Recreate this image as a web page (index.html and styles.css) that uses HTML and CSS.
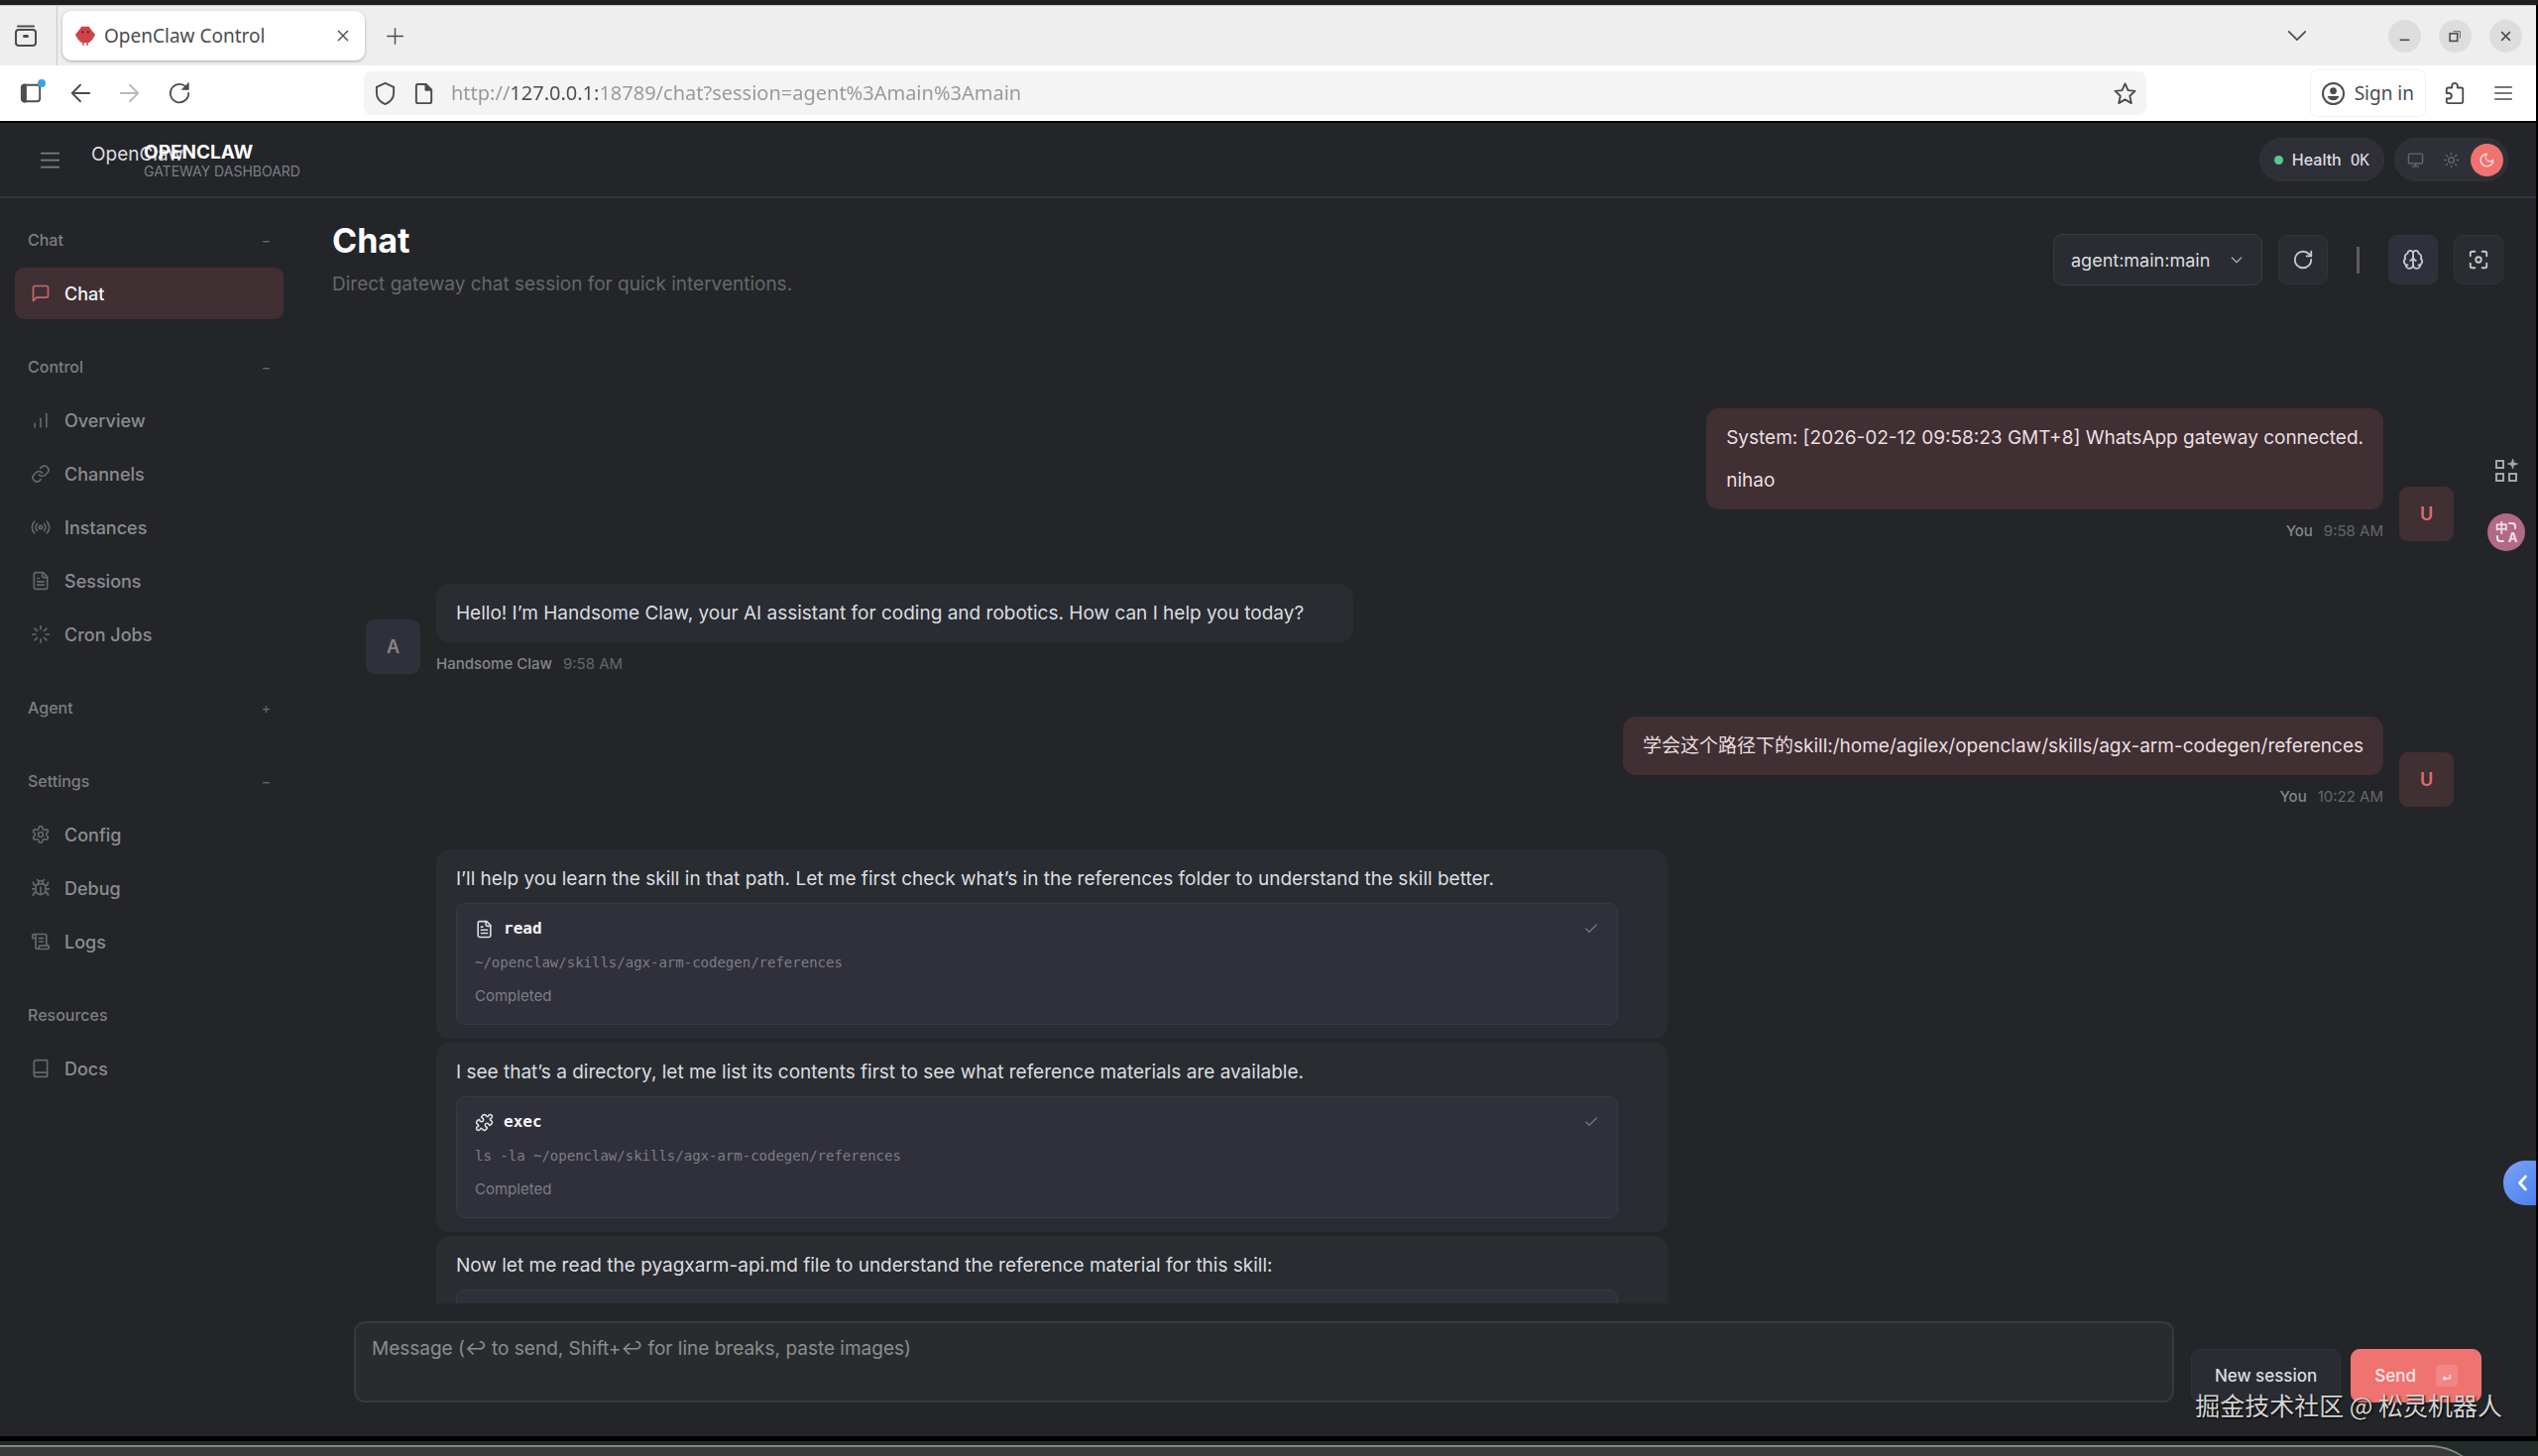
FILE: index.html
```html
<!DOCTYPE html>
<html lang="en">
<head>
    <meta charset="UTF-8">
    <meta name="viewport" content="width=device-width, initial-scale=1.0">
    <title>OpenClaw Control</title>
    <link rel="stylesheet" href="styles.css">
</head>
<body>
    <!-- Shared icons -->
    <svg class="sprite" aria-hidden="true">
        <symbol id="i-file" viewBox="0 0 24 24"><path d="M15 2H6a2 2 0 0 0-2 2v16a2 2 0 0 0 2 2h12a2 2 0 0 0 2-2V7z"/><path d="M14 2v4a2 2 0 0 0 2 2h4M10 9H8M16 13H8M16 17H8"/></symbol>
        <symbol id="i-check" viewBox="0 0 24 24"><path d="M20 6 9 17l-5-5"/></symbol>
        <symbol id="i-down" viewBox="0 0 24 24"><path d="m5 9 7 7 7-7"/></symbol>
        <symbol id="i-x" viewBox="0 0 24 24"><path d="M5 5l14 14M19 5L5 19"/></symbol>
        <symbol id="i-menu" viewBox="0 0 24 24"><path d="M2 4h20M2 12h20M2 20h20"/></symbol>
    </svg>

    <div class="window">
        <div class="tabbar">
            <button class="tab-view" aria-label="Firefox View">
                <svg class="icon" viewBox="0 0 24 24"><path d="M4 2.500h16"/><rect x="2" y="6" width="20" height="16" rx="3"/><path d="M10.500 12.500h3" stroke-width="3"/></svg>
            </button>
            <div class="tab">
                <svg class="favicon" viewBox="0 0 24 24"><path d="M8 2h8l3 4 4 5-3 5-3 3-2 1v3h-1.500v-3h-3v3H9v-3l-2-1-3-3-3-5 4-5z" fill="#cf4348"/><circle cx="9" cy="8" r="1.200" fill="#5d1b20"/><circle cx="15" cy="8" r="1.200" fill="#5d1b20"/></svg>
                <span class="tab-title">OpenClaw Control</span>
                <button class="tab-close" aria-label="Close tab"><svg class="icon" viewBox="0 0 24 24"><use href="#i-x"/></svg></button>
            </div>
            <button class="tab-new" aria-label="New tab"><svg class="icon" viewBox="0 0 24 24"><path d="M12 1v22M1 12h22"/></svg></button>
            <div class="window-controls">
                <button class="tab-list" aria-label="List all tabs"><svg class="icon" viewBox="0 0 24 24"><path d="m2 7 10 10L22 7"/></svg></button>
                <button class="window-btn" aria-label="Minimize"><svg class="icon" viewBox="0 0 24 24"><path d="M3 19h18" stroke-width="3"/></svg></button>
                <button class="window-btn" aria-label="Restore"><svg class="icon" viewBox="0 0 24 24"><rect x="2" y="7" width="14" height="14" stroke-width="3"/><path d="M8 3h13v13" stroke-width="1.500"/></svg></button>
                <button class="window-btn" aria-label="Close"><svg class="icon" viewBox="0 0 24 24"><path d="M4 4l16 16M20 4L4 20" stroke-width="3"/></svg></button>
            </div>
        </div>

        <div class="toolbar">
            <div class="toolbar-nav">
                <button class="tool-btn has-dot" aria-label="Sidebars"><svg class="icon" viewBox="0 0 24 24"><rect x="2" y="3" width="20" height="18" rx="3"/><path d="M5 4v16" stroke-width="5"/></svg></button>
                <button class="tool-btn" aria-label="Back"><svg class="icon" viewBox="0 0 24 24"><path d="M22 12H3M12 3l-9 9 9 9"/></svg></button>
                <button class="tool-btn faded" aria-label="Forward"><svg class="icon" viewBox="0 0 24 24"><path d="M2 12h19M12 3l9 9-9 9"/></svg></button>
                <button class="tool-btn" aria-label="Reload"><svg class="icon" viewBox="0 0 24 24"><path d="M22 12a10 10 0 1 1-3-7l2 2"/><path d="M22 1v7h-7z" fill="currentColor" stroke-width="1"/></svg></button>
            </div>
            <div class="urlbar">
                <svg class="icon" viewBox="0 0 24 24"><path d="M12 1 3 5v6c0 6 4 10 9 12 5-2 9-6 9-12V5z"/></svg>
                <svg class="icon" viewBox="0 0 24 24"><path d="M14 2H6a2 2 0 0 0-2 2v16a2 2 0 0 0 2 2h12a2 2 0 0 0 2-2V8z"/><path d="M14 2v6h6z" fill="currentColor"/></svg>
                <input class="url" type="text" aria-label="Address" value="http://127.0.0.1:18789/chat?session=agent%3Amain%3Amain">
                <button class="url-star" aria-label="Bookmark this page"><svg class="icon" viewBox="0 0 24 24"><path d="m12 1.500 3.200 7 7.300.8-5.500 5 1.600 7.700-6.600-3.900L5.400 22 7 14.300l-5.500-5 7.300-.8z" stroke-linejoin="round"/></svg></button>
            </div>
            <div class="toolbar-end">
                <button class="sign-in">
                    <svg class="icon" viewBox="0 0 24 24"><circle cx="12" cy="12" r="11"/><circle cx="12" cy="9" r="3.500" fill="currentColor" stroke="none"/><path d="M6 14.500h12c-1 3-3 4.500-6 4.500s-5-1.500-6-4.500z" fill="currentColor" stroke="none"/></svg>
                    <span>Sign in</span>
                </button>
                <button class="tool-btn" aria-label="Extensions"><svg class="icon" viewBox="0 0 24 24"><path d="M3 9V8a2 2 0 0 1 2-2h4V4a3 3 0 0 1 6 0v2h4a2 2 0 0 1 2 2v13a2 2 0 0 1-2 2H5a2 2 0 0 1-2-2v-3h2.500a2.500 2.500 0 0 0 0-6H3z"/></svg></button>
                <button class="tool-btn" aria-label="Application menu"><svg class="icon small" viewBox="0 0 24 24"><path d="M1 4h22M1 12h22M1 20h22"/></svg></button>
            </div>
        </div>

        <div class="app">
            <header class="topbar">
                <button class="nav-toggle" aria-label="Collapse sidebar"><svg class="icon" viewBox="0 0 24 24"><use href="#i-menu"/></svg></button>
                <div class="brand">
                    <span class="brand-logo">OpenClaw</span>
                    <div class="brand-text">
                        <div class="brand-title">OPENCLAW</div>
                        <div class="brand-sub">GATEWAY DASHBOARD</div>
                    </div>
                </div>
                <div class="topbar-status">
                    <div class="pill"><span class="dot"></span><span>Health</span><span class="mono">OK</span></div>
                    <div class="theme">
                        <button class="theme-btn" aria-label="System theme"><svg class="icon" viewBox="0 0 24 24"><rect x="2" y="3" width="20" height="14" rx="2"/><path d="M8 21h8M12 17v4"/></svg></button>
                        <button class="theme-btn" aria-label="Light theme"><svg class="icon" viewBox="0 0 24 24"><circle cx="12" cy="12" r="4"/><path d="M12 2v2M12 20v2M4.900 4.900l1.400 1.400M17.700 17.700l1.400 1.400M2 12h2M20 12h2M6.300 17.700l-1.400 1.400M19.100 4.900l-1.400 1.400"/></svg></button>
                        <button class="theme-btn active" aria-label="Dark theme"><svg class="icon" viewBox="0 0 24 24"><path d="M12 3a6 6 0 0 0 9 9 9 9 0 1 1-9-9z"/></svg></button>
                    </div>
                </div>
            </header>

            <div class="shell">
                <nav class="sidebar">
                    <div class="nav-group">
                        <button class="nav-label">Chat <span>−</span></button>
                        <a href="#chat" class="nav-item active"><svg class="icon" viewBox="0 0 24 24"><path d="M21 15a2 2 0 0 1-2 2H7l-4 4V5a2 2 0 0 1 2-2h14a2 2 0 0 1 2 2z"/></svg>Chat</a>
                    </div>
                    <div class="nav-group">
                        <button class="nav-label">Control <span>−</span></button>
                        <a href="#overview" class="nav-item"><svg class="icon" viewBox="0 0 24 24"><path d="M12 20V10M19 20V4M5 20v-4"/></svg>Overview</a>
                        <a href="#channels" class="nav-item"><svg class="icon" viewBox="0 0 24 24"><path d="M10 13a5 5 0 0 0 7.500.5l3-3a5 5 0 0 0-7-7l-1.700 1.700"/><path d="M14 11a5 5 0 0 0-7.500-.5l-3 3a5 5 0 0 0 7 7l1.700-1.700"/></svg>Channels</a>
                        <a href="#instances" class="nav-item"><svg class="icon" viewBox="0 0 24 24"><circle cx="12" cy="12" r="2"/><path d="M16.200 7.800a6 6 0 0 1 0 8.400M7.800 16.200a6 6 0 0 1 0-8.400M19.500 4.900a10 10 0 0 1 0 14.200M4.500 19.100a10 10 0 0 1 0-14.200"/></svg>Instances</a>
                        <a href="#sessions" class="nav-item"><svg class="icon" viewBox="0 0 24 24"><use href="#i-file"/></svg>Sessions</a>
                        <a href="#cron" class="nav-item"><svg class="icon" viewBox="0 0 24 24"><path d="M12 2v4M12 18v4M4.900 4.900l2.900 2.900M16.200 16.200l2.900 2.900M2 12h4M18 12h4M4.900 19.100l2.900-2.900M16.200 7.800l2.900-2.900"/></svg>Cron Jobs</a>
                    </div>
                    <div class="nav-group">
                        <button class="nav-label">Agent <span>+</span></button>
                    </div>
                    <div class="nav-group">
                        <button class="nav-label">Settings <span>−</span></button>
                        <a href="#config" class="nav-item"><svg class="icon" viewBox="0 0 24 24"><path d="M12.200 2h-.4a2 2 0 0 0-2 2v.2a2 2 0 0 1-1 1.700l-.4.3a2 2 0 0 1-2 0l-.2-.1a2 2 0 0 0-2.700.7l-.2.400a2 2 0 0 0 .7 2.700l.2.100a2 2 0 0 1 1 1.700v.5a2 2 0 0 1-1 1.700l-.2.100a2 2 0 0 0-.7 2.700l.2.400a2 2 0 0 0 2.700.7l.2-.1a2 2 0 0 1 2 0l.4.3a2 2 0 0 1 1 1.700v.2a2 2 0 0 0 2 2h.4a2 2 0 0 0 2-2v-.2a2 2 0 0 1 1-1.700l.4-.3a2 2 0 0 1 2 0l.2.1a2 2 0 0 0 2.700-.7l.2-.4a2 2 0 0 0-.7-2.700l-.2-.1a2 2 0 0 1-1-1.700v-.5a2 2 0 0 1 1-1.700l.2-.1a2 2 0 0 0 .7-2.700l-.2-.4a2 2 0 0 0-2.700-.7l-.2.1a2 2 0 0 1-2 0l-.4-.3a2 2 0 0 1-1-1.700V4a2 2 0 0 0-2-2z"/><circle cx="12" cy="12" r="3"/></svg>Config</a>
                        <a href="#debug" class="nav-item"><svg class="icon" viewBox="0 0 24 24"><path d="m8 2 1.900 1.900M14.100 3.900 16 2M9 7.100v-1a3 3 0 1 1 6 0v1"/><path d="M12 20a6 6 0 0 1-6-6v-3a4 4 0 0 1 4-4h4a4 4 0 0 1 4 4v3a6 6 0 0 1-6 6zM12 20v-9M6.500 9A4 4 0 0 1 3 5M6 13H2M3 21a4 4 0 0 1 3.800-4M21 5a4 4 0 0 1-3.500 4M22 13h-4M17.200 17A4 4 0 0 1 21 21"/></svg>Debug</a>
                        <a href="#logs" class="nav-item"><svg class="icon" viewBox="0 0 24 24"><path d="M15 12h-5M15 8h-5M19 17V5a2 2 0 0 0-2-2H4"/><path d="M8 21h12a2 2 0 0 0 2-2v-1a1 1 0 0 0-1-1H11a1 1 0 0 0-1 1v1a2 2 0 1 1-4 0V5a2 2 0 1 0-4 0v2a1 1 0 0 0 1 1h3"/></svg>Logs</a>
                    </div>
                    <div class="nav-group">
                        <div class="nav-label">Resources</div>
                        <a href="#docs" class="nav-item"><svg class="icon" viewBox="0 0 24 24"><path d="M4 19.500v-15A2.500 2.500 0 0 1 6.500 2H20v20H6.500a2.500 2.500 0 0 1 0-5H20"/></svg>Docs</a>
                    </div>
                </nav>

                <main class="main">
                    <div class="page-head">
                        <div>
                            <h1 class="page-title">Chat</h1>
                            <p class="page-sub">Direct gateway chat session for quick interventions.</p>
                        </div>
                        <div class="controls">
                            <div class="session">
                                <select class="session-select" aria-label="Session"><option>agent:main:main</option></select>
                                <svg class="icon" viewBox="0 0 24 24"><use href="#i-down"/></svg>
                            </div>
                            <button class="icon-btn" aria-label="Refresh"><svg class="icon" viewBox="0 0 24 24"><path d="M21 12a9 9 0 1 1-9-9c2.500 0 4.900 1 6.700 2.700L21 8"/><path d="M21 3v5h-5"/></svg></button>
                            <span class="divider"></span>
                            <button class="icon-btn active" aria-label="Toggle thinking"><svg class="icon" viewBox="0 0 24 24"><path d="M12 5a3 3 0 1 0-6 .1 4 4 0 0 0-2.500 5.800 4 4 0 0 0 .5 6.600A4 4 0 1 0 12 18zM12 5a3 3 0 1 1 6 .1 4 4 0 0 1 2.500 5.800 4 4 0 0 1-.5 6.600A4 4 0 1 1 12 18z"/><path d="M15 13a4.500 4.500 0 0 1-3-4 4.500 4.500 0 0 1-3 4M6 18a4 4 0 0 1-2-.5M20 17.500a4 4 0 0 1-2 .5"/></svg></button>
                            <button class="icon-btn" aria-label="Focus mode"><svg class="icon" viewBox="0 0 24 24"><path d="M3 8V5a2 2 0 0 1 2-2h3M16 3h3a2 2 0 0 1 2 2v3M21 16v3a2 2 0 0 1-2 2h-3M8 21H5a2 2 0 0 1-2-2v-3"/><circle cx="12" cy="12" r="3"/></svg></button>
                        </div>
                    </div>

                    <div class="thread">
                        <div class="message user">
                            <div class="avatar">U</div>
                            <div class="message-body">
                                <div class="bubble">
                                    <p>System: [2026-02-12 09:58:23 GMT+8] WhatsApp gateway connected.</p>
                                    <p>nihao</p>
                                </div>
                                <div class="meta"><span class="sender">You</span><span>9:58 AM</span></div>
                            </div>
                        </div>

                        <div class="message">
                            <div class="avatar">A</div>
                            <div class="message-body">
                                <div class="bubble">
                                    <p>Hello! I’m Handsome Claw, your AI assistant for coding and robotics. How can I help you today?</p>
                                </div>
                                <div class="meta"><span class="sender">Handsome Claw</span><span>9:58 AM</span></div>
                            </div>
                        </div>

                        <div class="message user">
                            <div class="avatar">U</div>
                            <div class="message-body">
                                <div class="bubble">
                                    <p>学会这个路径下的skill:/home/agilex/openclaw/skills/agx-arm-codegen/references</p>
                                </div>
                                <div class="meta"><span class="sender">You</span><span>10:22 AM</span></div>
                            </div>
                        </div>

                        <div class="message with-tools">
                            <div class="message-body">
                                <div class="bubble">
                                    <p>I’ll help you learn the skill in that path. Let me first check what’s in the references folder to understand the skill better.</p>
                                    <div class="tool-card">
                                        <div class="tool-head">
                                            <svg class="icon" viewBox="0 0 24 24"><use href="#i-file"/></svg>
                                            <span class="tool-name">read</span>
                                            <svg class="icon tool-check" viewBox="0 0 24 24"><use href="#i-check"/></svg>
                                        </div>
                                        <div class="tool-detail">~/openclaw/skills/agx-arm-codegen/references</div>
                                        <div class="tool-status">Completed</div>
                                    </div>
                                </div>
                                <div class="bubble">
                                    <p>I see that’s a directory, let me list its contents first to see what reference materials are available.</p>
                                    <div class="tool-card">
                                        <div class="tool-head">
                                            <svg class="icon" viewBox="0 0 24 24"><path d="M15.390 4.390a1 1 0 0 0 1.680-.474 2.500 2.500 0 1 1 3.014 3.015 1 1 0 0 0-.474 1.680l1.683 1.682a2.414 2.414 0 0 1 0 3.414L19.610 15.390a1 1 0 0 1-1.680-.474 2.500 2.500 0 1 0-3.014 3.015 1 1 0 0 1 .474 1.680l-1.683 1.682a2.414 2.414 0 0 1-3.414 0L8.610 19.610a1 1 0 0 0-1.680.474 2.500 2.500 0 1 1-3.014-3.015 1 1 0 0 0 .474-1.680l-1.683-1.682a2.414 2.414 0 0 1 0-3.414L4.390 8.610a1 1 0 0 1 1.680.474 2.500 2.500 0 1 0 3.014-3.015 1 1 0 0 1-.474-1.680l1.683-1.682a2.414 2.414 0 0 1 3.414 0z"/></svg>
                                            <span class="tool-name">exec</span>
                                            <svg class="icon tool-check" viewBox="0 0 24 24"><use href="#i-check"/></svg>
                                        </div>
                                        <div class="tool-detail">ls -la ~/openclaw/skills/agx-arm-codegen/references</div>
                                        <div class="tool-status">Completed</div>
                                    </div>
                                </div>
                                <div class="bubble">
                                    <p>Now let me read the pyagxarm-api.md file to understand the reference material for this skill:</p>
                                    <div class="tool-card"></div>
                                </div>
                            </div>
                        </div>
                    </div>

                    <form class="composer">
                        <textarea class="composer-input" aria-label="Message" placeholder="Message (↩ to send, Shift+↩ for line breaks, paste images)"></textarea>
                        <button class="btn" type="button">New session</button>
                        <button class="btn primary" type="button">Send <kbd>↵</kbd></button>
                    </form>
                </main>
            </div>
        </div>

        <!-- Browser extension buttons -->
        <div class="float-tools">
            <button class="float-grid" aria-label="Widgets"><svg class="icon" viewBox="0 0 24 24"><rect x="2" y="2" width="7" height="7"/><rect x="2" y="15" width="7" height="7"/><rect x="15" y="15" width="7" height="7"/><path d="M18.500 0c.5 3.500 1.500 4.500 5 5-3.500.5-4.500 1.500-5 5-.5-3.500-1.500-4.500-5-5 3.500-.5 4.500-1.500 5-5z" fill="currentColor" stroke-width="1"/></svg></button>
            <button class="float-translate" aria-label="Translate"><span>中</span><span>A</span><svg class="icon" viewBox="0 0 24 24"><path d="M15 3h3a3 3 0 0 1 3 3v2M3 16v2a3 3 0 0 0 3 3h3"/></svg></button>
        </div>
        <button class="float-drawer" aria-label="Open drawer"><svg class="icon" viewBox="0 0 24 24"><path d="m16 3-8 9 8 9"/></svg></button>
    </div>

    <div class="dock"><div class="dock-panel"></div></div>
    <div class="watermark">掘金技术社区 @ 松灵机器人</div>
</body>
</html>
```
FILE: styles.css
```css
* {
    box-sizing: border-box;
    margin: 0;
    padding: 0;
}

:root {
    --bg: #232529;
    --surface: #292c31;
    --elevated: #30303a;
    --border: #313439;
    --text: #dcdde0;
    --strong: #f4f4f5;
    --muted: #7d7e84;
    --dim: #66676d;
    --accent: #ee7371;
    --accent-soft: #402f33;
    --chrome-text: #4c4c50;
    --font: Inter, "Noto Sans CJK SC", sans-serif;
    --mono: "DejaVu Sans Mono", "Liberation Mono", monospace;
    --ui: "Noto Sans", sans-serif;
}

body {
    display: flex;
    flex-direction: column;
    height: 100vh;
    padding-top: 5px;
    overflow: hidden;
    position: relative;
    font-family: var(--font);
    font-size: 19px;
    color: var(--text);
    background: #1e1e1f;
}

button {
    display: flex;
    align-items: center;
    justify-content: center;
    font: inherit;
    color: inherit;
    background: none;
    border: none;
    cursor: pointer;
}

.sprite {
    display: none;
}

.icon {
    flex: none;
    width: 20px;
    height: 20px;
    fill: none;
    stroke: currentColor;
    stroke-width: 2;
    stroke-linecap: round;
    stroke-linejoin: round;
}

.window {
    flex: 1;
    min-height: 0;
    display: flex;
    flex-direction: column;
    position: relative;
    border-right: 2px solid #000;
    border-bottom: 5px solid #000;
}

/* Browser tabs */
.tabbar {
    display: flex;
    align-items: center;
    height: 61px;
    background: #eeeeee;
    border-top: 1px solid #c8c8c8;
    color: var(--chrome-text);
    font-family: var(--ui);
}

.tab-view {
    width: 58px;
    height: 100%;
    padding-right: 6px;
    border-right: 1px solid #c9c9c9;
}

.tab-view .icon {
    width: 24px;
    height: 24px;
}

.tab {
    display: flex;
    align-items: center;
    width: 305px;
    height: 50px;
    margin-left: 5px;
    padding: 0 12px;
    background: #fff;
    border-radius: 9px;
    box-shadow: 0 1px 3px rgba(0, 0, 0, 0.3);
}

.favicon {
    width: 22px;
    height: 22px;
    margin-right: 8px;
}

.tab-title {
    flex: 1;
    font-size: 19px;
}

.tab-close .icon {
    width: 16px;
    height: 16px;
}

.tab-close {
    width: 20px;
}

.tab-new {
    width: 60px;
}

.tab-new .icon {
    width: 17px;
    height: 17px;
}

.window-controls {
    display: flex;
    align-items: center;
    gap: 18px;
    margin-left: auto;
    padding-right: 14px;
}

.tab-list {
    margin-right: 64px;
}

.window-btn {
    width: 33px;
    height: 33px;
    border-radius: 50%;
    background: #dddddd;
}

.window-btn .icon {
    width: 13px;
    height: 13px;
    stroke-linecap: butt;
    stroke-linejoin: miter;
}

/* Address bar */
.toolbar {
    display: grid;
    grid-template-columns: 367px minmax(0, 1fr) 393px;
    align-items: center;
    height: 58px;
    background: #fff;
    border-bottom: 2px solid #000;
    color: var(--chrome-text);
    font-family: var(--ui);
}

.toolbar-nav {
    display: flex;
    gap: 18px;
    padding-left: 15px;
}

.tool-btn {
    width: 32px;
    height: 32px;
    position: relative;
}

.tool-btn .icon {
    width: 22px;
    height: 22px;
}

.tool-btn .icon.small {
    width: 18px;
    height: 18px;
}

.tool-btn.faded {
    color: #b9b9bb;
}

.tool-btn.has-dot::after {
    content: '';
    position: absolute;
    top: 2px;
    right: 1px;
    width: 8px;
    height: 8px;
    border-radius: 50%;
    background: #39a7dc;
}

.urlbar {
    display: flex;
    align-items: center;
    gap: 16px;
    height: 44px;
    padding: 0 10px;
    border-radius: 8px;
    background: #f4f4f4;
}

.urlbar .icon {
    width: 23px;
    height: 23px;
}

.url {
    flex: 1;
    min-width: 0;
    border: none;
    outline: none;
    font-family: var(--ui);
    font-size: 20px;
    line-height: 28px;
    color: #97979a;
    /* host part is darker than the rest of the address */
    background: linear-gradient(90deg, #97979a 61px, #4c4c50 61px, #4c4c50 150px, #97979a 150px);
    background-clip: text;
    -webkit-background-clip: text;
    -webkit-text-fill-color: transparent;
}

.toolbar-end {
    display: flex;
    align-items: center;
    justify-content: flex-end;
    gap: 17px;
    padding-right: 17px;
}

.sign-in {
    gap: 10px;
    height: 48px;
    padding: 0 11px;
    border: 1px solid #f0f0f2;
    border-radius: 8px;
    font-size: 19px;
}

.sign-in .icon {
    width: 23px;
    height: 23px;
}

.sign-in + .tool-btn {
    margin-left: -4px;
}

/* App */
.app {
    flex: 1;
    min-height: 0;
    display: flex;
    flex-direction: column;
    background: var(--bg);
}

.topbar {
    display: flex;
    align-items: center;
    height: 76px;
    padding: 0 28px 0 32px;
    border-bottom: 2px solid var(--border);
}

.nav-toggle {
    width: 36px;
    color: var(--muted);
}

.nav-toggle .icon {
    width: 21px;
    height: 21px;
}

.brand {
    display: flex;
    gap: 15px;
    margin-left: 24px;
    padding-top: 3px;
}

.brand-logo {
    width: 38px;
    line-height: 24px;
    white-space: nowrap;
}

.brand-title {
    font-size: 19px;
    font-weight: 700;
    line-height: 20px;
    color: #fff;
}

.brand-sub {
    font-size: 14px;
    line-height: 18px;
    color: var(--muted);
}

.topbar-status {
    display: flex;
    gap: 10px;
    margin-left: auto;
}

.pill,
.theme {
    display: flex;
    align-items: center;
    height: 44px;
    border: 1px solid var(--border);
    border-radius: 22px;
    background: #2f2f37;
}

.pill {
    gap: 9px;
    padding: 0 14px;
    font-size: 16px;
    font-weight: 500;
}

.mono {
    font-family: var(--mono);
}

.dot {
    width: 9px;
    height: 9px;
    border-radius: 50%;
    background: #5cc792;
}

.theme {
    gap: 3px;
    padding: 0 4px;
}

.theme-btn {
    width: 33px;
    height: 33px;
    border-radius: 50%;
    color: var(--dim);
}

.theme-btn .icon {
    width: 17px;
    height: 17px;
}

.theme-btn.active {
    background: var(--accent);
    color: #ffd9d6;
}

.shell {
    flex: 1;
    min-height: 0;
    display: grid;
    grid-template-columns: 302px minmax(0, 1fr);
}

/* Sidebar */
.sidebar {
    padding: 18px 16px 0 15px;
}

.nav-group {
    display: flex;
    flex-direction: column;
    gap: 2px;
    margin-bottom: 24px;
}

.nav-label {
    display: flex;
    align-items: center;
    justify-content: space-between;
    height: 48px;
    margin-bottom: 2px;
    padding: 0 13px;
    font-size: 16px;
    font-weight: 500;
    color: var(--muted);
}

.nav-label span {
    font-size: 14px;
    color: var(--dim);
}

.nav-item {
    display: flex;
    align-items: center;
    gap: 14px;
    height: 52px;
    padding: 0 16px;
    border-radius: 9px;
    font-size: 18px;
    font-weight: 500;
    color: #8b8c91;
    text-decoration: none;
}

.nav-item .icon {
    color: var(--dim);
}

.nav-item.active {
    background: var(--accent-soft);
    color: var(--strong);
}

.nav-item.active .icon {
    color: #c8686b;
}

/* Main column */
.main {
    display: flex;
    flex-direction: column;
    min-height: 0;
    padding: 23px 33px 34px;
}

.page-head {
    display: flex;
    align-items: center;
    justify-content: space-between;
}

.page-title {
    font-size: 34px;
    font-weight: 700;
    line-height: 40px;
    color: #fff;
}

.page-sub {
    margin-top: 10px;
    line-height: 28px;
    color: var(--dim);
}

.controls {
    display: flex;
    align-items: center;
    gap: 16px;
}

.session {
    position: relative;
}

.session-select {
    appearance: none;
    width: 211px;
    height: 52px;
    padding: 0 17px;
    border: 1px solid #383b40;
    border-radius: 9px;
    background: var(--surface);
    font-family: var(--font);
    font-size: 18px;
    color: var(--text);
}

.session .icon {
    position: absolute;
    top: 18px;
    right: 18px;
    width: 16px;
    height: 16px;
    color: #a8a9ad;
    pointer-events: none;
}

.icon-btn {
    width: 50px;
    height: 50px;
    border: 1px solid var(--border);
    border-radius: 9px;
    background: #2a2c31;
    color: #c9cacd;
}

.icon-btn.active {
    background: #2f303b;
}

.icon-btn .icon {
    width: 22px;
    height: 22px;
}

.divider {
    width: 3px;
    height: 27px;
    margin: 0 13px;
    background: #5d5d5c;
}

/* Messages */
.thread {
    flex: 1;
    min-height: 0;
    display: flex;
    flex-direction: column;
    gap: 43px;
    overflow: hidden;
    padding: 111px 50px 0 34px;
}

.message {
    flex: none;
    display: flex;
    align-items: flex-end;
    gap: 16px;
}

.message.user {
    flex-direction: row-reverse;
}

.message.with-tools {
    padding-left: 71px;
}

.avatar {
    display: flex;
    align-items: center;
    justify-content: center;
    width: 55px;
    height: 55px;
    border-radius: 9px;
    background: var(--elevated);
    font-size: 18px;
    font-weight: 600;
    color: #85868d;
}

.user .avatar {
    background: var(--accent-soft);
    color: #dd6f70;
}

.message-body {
    display: flex;
    flex-direction: column;
    gap: 4px;
}

.with-tools .message-body {
    flex: 1;
    max-width: 1242px;
}

.bubble {
    padding: 15px 50px 14px 20px;
    border-radius: 13px;
    background: var(--surface);
    line-height: 30px;
}

.user .bubble {
    padding-right: 20px;
    background: var(--accent-soft);
    color: #eadfe0;
}

.bubble p + p {
    margin-top: 13px;
}

.meta {
    display: flex;
    gap: 11px;
    margin-top: 8px;
    font-size: 15px;
    line-height: 20px;
    color: var(--dim);
}

.user .meta {
    justify-content: flex-end;
}

.sender {
    font-weight: 500;
    color: #85868b;
}

.tool-card {
    height: 123px;
    margin-top: 9px;
    padding: 10px 18px;
    border: 1px solid #393b41;
    border-radius: 9px;
    background: var(--elevated);
}

.tool-head {
    display: flex;
    align-items: center;
    gap: 10px;
    font-size: 16px;
}

.tool-head .icon {
    width: 19px;
    height: 19px;
}

.tool-name {
    font-family: var(--mono);
    font-weight: 700;
    color: var(--strong);
}

.tool-check {
    margin-left: auto;
    color: #74757b;
}

.tool-head .tool-check {
    width: 16px;
    height: 16px;
}

.tool-detail {
    margin-top: 4px;
    font-family: var(--mono);
    font-size: 14px;
    color: var(--muted);
}

.tool-status {
    margin-top: 4px;
    font-size: 15px;
    color: var(--muted);
}

/* Composer */
.composer {
    display: flex;
    align-items: flex-end;
    gap: 10px;
    padding: 18px 22px 0;
}

.composer-input {
    flex: 1;
    height: 82px;
    margin-right: 7px;
    padding: 12px 16px;
    border: 2px solid #37393d;
    border-radius: 11px;
    background: #292c2f;
    font-family: var(--font);
    font-size: 19px;
    line-height: 28px;
    color: var(--text);
    resize: none;
}

.composer-input::placeholder {
    color: #8b8c8f;
}

.btn {
    gap: 20px;
    height: 54px;
    padding: 0 23px;
    border: 1px solid var(--border);
    border-radius: 9px;
    background: #292c32;
    font-size: 17px;
    font-weight: 500;
}

.btn.primary {
    border-color: var(--accent);
    background: var(--accent);
    color: #ffe9e6;
}

kbd {
    width: 22px;
    height: 22px;
    border-radius: 4px;
    background: rgba(255, 255, 255, 0.15);
    font-family: var(--mono);
    font-size: 14px;
    line-height: 22px;
    text-align: center;
}

/* Overlays */
.float-tools {
    position: absolute;
    top: 458px;
    right: 11px;
    display: flex;
    flex-direction: column;
    align-items: center;
    gap: 31px;
}

.float-grid {
    color: #a5a6a8;
}

.float-grid .icon {
    width: 24px;
    height: 24px;
    stroke-linejoin: miter;
}

.float-translate {
    position: relative;
    width: 38px;
    height: 38px;
    border-radius: 50%;
    background: #b06a86;
    color: #f3dfe7;
    font-size: 13px;
    font-weight: 700;
    line-height: 14px;
}

.float-translate span:first-child {
    padding-bottom: 10px;
}

.float-translate span:nth-child(2) {
    padding-top: 10px;
}

.float-translate .icon {
    position: absolute;
    top: 7px;
    left: 7px;
    width: 24px;
    height: 24px;
}

.float-drawer {
    position: absolute;
    right: 0;
    bottom: 233px;
    width: 33px;
    height: 45px;
    padding-left: 6px;
    border-radius: 22px 0 0 22px;
    background: linear-gradient(135deg, #7ba4f5, #4a80ee);
    color: #fff;
}

.float-drawer .icon {
    width: 17px;
    height: 17px;
    stroke-width: 4;
}

.dock {
    height: 15px;
    padding-top: 4px;
    overflow: hidden;
    background: #232b2a;
}

.dock-panel {
    height: 80px;
    margin-right: 50px;
    border-top: 2px solid #818b86;
    border-radius: 0 60px 0 0;
    background: #3b3a3a;
}

.watermark {
    position: absolute;
    right: 36px;
    bottom: 34px;
    font-family: "Noto Sans CJK SC", sans-serif;
    font-size: 25px;
    line-height: 36px;
    color: #d3d3d3;
    text-shadow: 1px 1px 2px #000;
}
```
